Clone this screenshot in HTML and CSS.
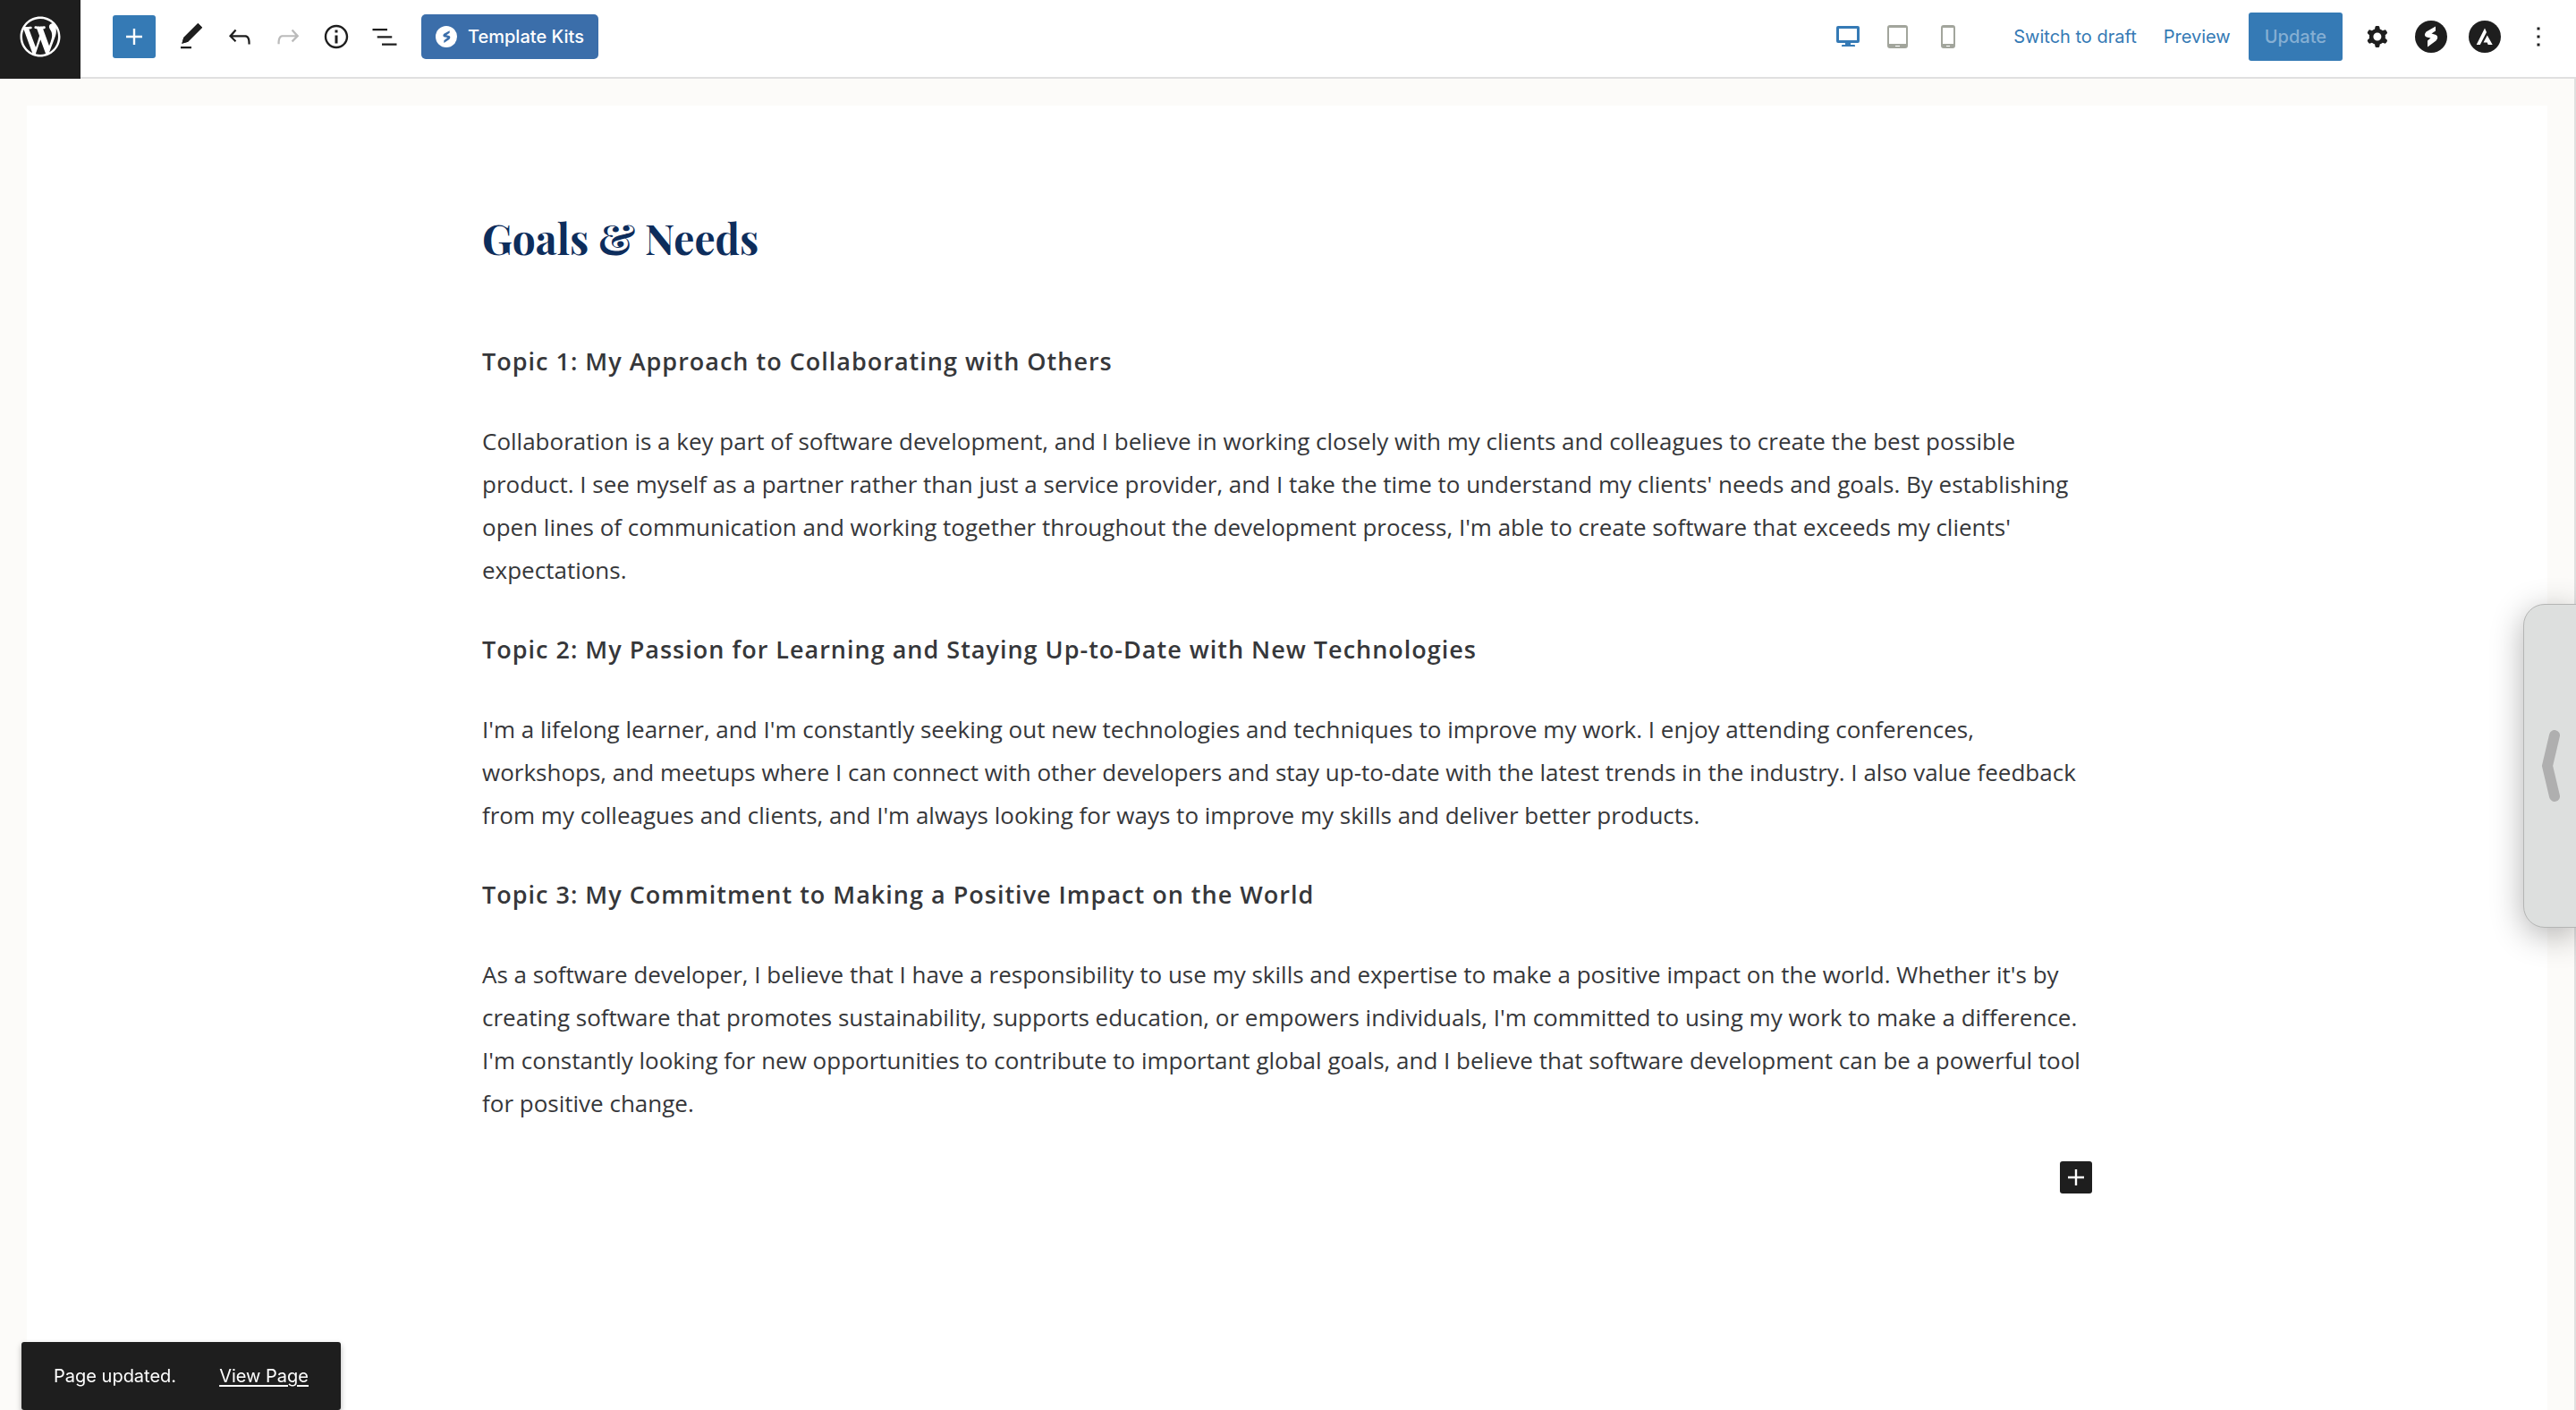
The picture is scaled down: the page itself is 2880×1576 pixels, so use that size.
FILE: index.html
```html
<!DOCTYPE html>
<html lang="en">
<head>
<meta charset="utf-8">
<title>Edit Page</title>
<link rel="stylesheet" href="styles.css">
</head>
<body>
<header class="toolbar">
  <a class="home" href="#" aria-label="View pages">
    <svg viewBox="-2 -2 24 24"><path d="M20 10c0-5.51-4.49-10-10-10C4.48 0 0 4.49 0 10c0 5.52 4.48 10 10 10 5.51 0 10-4.48 10-10zM7.78 15.37L4.37 6.22c.55-.02 1.17-.08 1.17-.08.5-.06.44-1.13-.06-1.11 0 0-1.45.11-2.37.11-.18 0-.37 0-.58-.01C4.12 2.69 6.87 1.11 10 1.11c2.33 0 4.45.87 6.05 2.34-.68-.11-1.65.39-1.65 1.58 0 .74.45 1.36.9 2.1.35.61.55 1.36.55 2.46 0 1.49-1.4 5-1.4 5l-3.03-8.37c.54-.02.82-.17.82-.17.5-.05.44-1.25-.06-1.22 0 0-1.44.12-2.38.12-.87 0-2.33-.12-2.33-.12-.5-.03-.56 1.2-.06 1.22l.92.08 1.26 3.41zM17.41 10c.24-.64.74-1.87.43-4.25.7 1.29 1.05 2.71 1.05 4.25 0 3.29-1.73 6.24-4.4 7.78.97-2.59 1.94-5.2 2.92-7.78zM6.1 18.09C3.12 16.65 1.11 13.53 1.11 10c0-1.3.23-2.48.72-3.59C3.25 10.3 4.67 14.2 6.1 18.09zm4.03-6.63l2.58 6.98c-.86.29-1.76.45-2.71.45-.79 0-1.57-.11-2.29-.33.81-2.38 1.62-4.74 2.42-7.1z"/></svg>
  </a>
  <div class="tools">
    <button class="insert" aria-label="Add block"><svg viewBox="0 0 24 24"><path d="M18 11.2h-5.2V6h-1.6v5.2H6v1.6h5.2V18h1.6v-5.2H18z"/></svg></button>
    <div class="icons">
      <button class="icon" aria-label="Tools"><svg viewBox="0 0 24 24"><path d="M20.1 5.1L16.9 2 6.2 12.7l-1.3 4.4 4.5-1.3L20.1 5.1zM4 20.8h8v-1.5H4v1.5z"/><path d="M16.9 2 6.2 12.7l-1.3 4.4 4.5-1.3L20.1 5.1z"/></svg></button>
      <button class="icon" aria-label="Undo"><svg viewBox="0 0 24 24"><path d="M18.3 11.7c-.6-.6-1.4-.9-2.3-.9H6.7l2.9-3.3-1.1-1-4.5 5L8.5 16l1-1-2.7-2.7H16c.5 0 .9.2 1.3.5 1 1 1 3.4 1 4.5v.3h1.5v-.2c0-1.5 0-4.3-1.5-5.7z"/></svg></button>
      <button class="icon" aria-label="Redo" disabled><svg viewBox="0 0 24 24"><path d="M15.6 6.5l-1.1 1 2.9 3.3H8c-.9 0-1.7.3-2.3.9-1.4 1.5-1.4 4.2-1.4 5.6v.2h1.5v-.3c0-1.1 0-3.5 1-4.5.3-.3.7-.5 1.3-.5h9.2L14.5 15l1.1 1.1 4.6-4.6-4.6-5z"/></svg></button>
      <button class="icon" aria-label="Details"><svg viewBox="0 0 24 24"><path d="M12 3.2c-4.8 0-8.8 3.9-8.8 8.8 0 4.8 3.9 8.8 8.8 8.8 4.8 0 8.8-3.9 8.8-8.8 0-4.8-4-8.8-8.8-8.8zm0 16c-4 0-7.2-3.3-7.2-7.2C4.8 8 8 4.8 12 4.8s7.2 3.3 7.2 7.2c0 4-3.2 7.2-7.2 7.2zM11 17h2v-6h-2v6zm0-8h2V7h-2v2z"/></svg></button>
      <button class="icon" aria-label="List view"><svg viewBox="0 0 24 24"><path d="M3 6h11v1.5H3V6Zm3.5 5.5h11V13h-11v-1.5ZM21 17H10v1.5h11V17Z"/></svg></button>
    </div>
    <button class="kits"><svg viewBox="0 0 36 36"><circle cx="18" cy="18" r="18"/><path class="mark" d="M23.500 8 14 13q-3 3 0 5.500l6 1-6 5v4l9-6q3-4 0-6l-5-1 5.500-4z"/></svg>Template Kits</button>
  </div>
  <div class="settings">
    <div class="devices">
      <button class="device active" aria-label="Desktop"><svg viewBox="0 0 26 26"><path fill-rule="evenodd" d="M2 1h22q2 0 2 2v15q0 2-2 2h-8v2h4q1 0 1 1v1H6v-1q0-1 1-1h3v-2H2q-2 0-2-2V3q0-2 2-2zm1 3v13h20V4z"/></svg></button>
      <button class="device" aria-label="Tablet"><svg viewBox="0 0 26 26"><path fill-rule="evenodd" d="M4 0h17q3 0 3 3v20q0 3-3 3H4q-3 0-3-3V3q0-3 3-3zM3 3v18h19V3zm7 20v1h5v-1z"/></svg></button>
      <button class="device" aria-label="Mobile"><svg viewBox="0 0 26 26"><path fill-rule="evenodd" d="M8 0h10q3 0 3 3v20q0 3-3 3H8q-3 0-3-3V3q0-3 3-3zM7 3v18h12V3zm4 20v1h4v-1z"/></svg></button>
    </div>
    <button class="link">Switch to draft</button>
    <button class="link">Preview</button>
    <button class="update">Update</button>
    <div class="panels">
      <button class="icon" aria-label="Settings"><svg viewBox="0 0 24 24"><path fill-rule="evenodd" d="M10.289 4.836A1 1 0 0111.275 4h1.306a1 1 0 01.987.836l.244 1.466c.787.26 1.503.679 2.108 1.218l1.393-.522a1 1 0 011.216.437l.653 1.13a1 1 0 01-.23 1.273l-1.148.944a6.025 6.025 0 010 2.435l1.149.946a1 1 0 01.23 1.272l-.653 1.13a1 1 0 01-1.216.437l-1.394-.522c-.605.54-1.32.958-2.108 1.218l-.244 1.466a1 1 0 01-.987.836h-1.306a1 1 0 01-.986-.836l-.244-1.466a5.995 5.995 0 01-2.108-1.218l-1.394.522a1 1 0 01-1.217-.436l-.653-1.131a1 1 0 01.23-1.272l1.149-.946a6.026 6.026 0 010-2.435l-1.148-.944a1 1 0 01-.23-1.272l.653-1.131a1 1 0 011.217-.437l1.393.522a5.994 5.994 0 012.108-1.218l.244-1.466zM14.929 12a3 3 0 11-6 0 3 3 0 016 0z"/></svg></button>
      <button class="icon" aria-label="Spectra"><svg viewBox="0 0 36 36"><circle cx="18" cy="18" r="18"/><path class="mark" d="M23 6.500 12.500 12.500q-3.500 4 .5 6l4.500 1-3.500 3v7l9.500-7q3.500-4 0-6.500l-5-1.500 4.500-3z"/></svg></button>
      <button class="icon" aria-label="Astra settings"><svg viewBox="0 0 36 36"><circle cx="18" cy="18" r="18"/><path class="mark" d="M18 8.500 8.700 27h4.100L20 13zM20.800 16.500 16.500 24.500h4.200l1 2.500h5z"/></svg></button>
      <button class="icon" aria-label="Options"><svg viewBox="0 0 24 24"><path d="M13 19h-2v-2h2v2zm0-6h-2v-2h2v2zm0-6h-2V5h2v2z"/></svg></button>
    </div>
  </div>
</header>
<main class="workspace">
  <article class="canvas">
    <div class="content">
      <h1>Goals &amp; Needs</h1>
      <h2>Topic 1: My Approach to Collaborating with Others</h2>
      <p>Collaboration is a key part of software development, and I believe in working closely with my clients and colleagues to create the best possible product. I see myself as a partner rather than just a service provider, and I take the time to understand my clients' needs and goals. By establishing open lines of communication and working together throughout the development process, I'm able to create software that exceeds my clients' expectations.</p>
      <h2>Topic 2: My Passion for Learning and Staying Up-to-Date with New Technologies</h2>
      <p>I'm a lifelong learner, and I'm constantly seeking out new technologies and techniques to improve my work. I enjoy attending conferences, workshops, and meetups where I can connect with other developers and stay up-to-date with the latest trends in the industry. I also value feedback from my colleagues and clients, and I'm always looking for ways to improve my skills and deliver better products.</p>
      <h2>Topic 3: My Commitment to Making a Positive Impact on the World</h2>
      <p>As a software developer, I believe that I have a responsibility to use my skills and expertise to make a positive impact on the world. Whether it's by creating software that promotes sustainability, supports education, or empowers individuals, I'm committed to using my work to make a difference. I'm constantly looking for new opportunities to contribute to important global goals, and I believe that software development can be a powerful tool for positive change.</p>
      <button class="append" aria-label="Add block"><svg viewBox="0 0 24 24"><path d="M18 11.2h-5.2V6h-1.6v5.2H6v1.6h5.2V18h1.6v-5.2H18z"/></svg></button>
    </div>
  </article>
</main>
<button class="drawer" aria-label="Open side panel"><svg viewBox="0 0 20 80"><path d="M14 6 6 40l8 34"/></svg></button>
<div class="snackbar" role="status">Page updated. <a href="#">View Page</a></div>
</body>
</html>
```

FILE: styles.css
```css
* { box-sizing: border-box; }

body {
  display: flex;
  flex-direction: column;
  height: 100vh;
  margin: 0;
  overflow: hidden;
  background: #fff;
  color: #1e1e1e;
  font: 20px/28px Inter, "Liberation Sans", sans-serif;
}

button {
  display: flex;
  align-items: center;
  justify-content: center;
  padding: 0;
  border: 0;
  background: none;
  color: inherit;
  font: inherit;
}

svg { display: block; fill: currentColor; }

.toolbar {
  display: flex;
  flex: none;
  justify-content: space-between;
  height: 88px;
  border-bottom: 2px solid #e0e0e0;
}

.home {
  display: flex;
  align-items: center;
  justify-content: center;
  width: 90px;
  height: 88px;
  padding-bottom: 6px;
  background: #1e1e1e;
  color: #fff;
}
.home svg { width: 54px; height: 54px; }

.tools, .settings {
  display: flex;
  align-items: center;
  padding-bottom: 4px;
}
.tools { flex: 1; padding-left: 36px; }
.settings { padding-right: 24px; }

.insert {
  width: 48px;
  height: 48px;
  border-radius: 3px;
  background: #357ab5;
  color: #fff;
}
.insert svg, .icon svg { width: 36px; height: 36px; }

.icons { display: flex; gap: 18px; margin: 0 23px 0 22px; }
.icon:disabled { color: #bbb; }
.mark { fill: #fff; }

.kits {
  gap: 12px;
  height: 50px;
  padding: 0 16px;
  border-radius: 5px;
  background: #3b6eaa;
  color: #fff;
  font-weight: 500;
}
.kits svg { width: 24px; height: 24px; }
.kits .mark { fill: #3b6eaa; }

.devices { display: flex; gap: 30px; margin-right: 60px; color: #a2a59c; }
.device svg { width: 26px; height: 26px; }
.active { color: #357ab5; }

.link { margin-right: 30px; color: #357ab5; }
.link + .link { margin-right: 20px; }

.update {
  height: 54px;
  padding: 0 18px;
  border-radius: 3px;
  background: #357ab5;
  color: #86afd3;
  font-weight: 500;
}

.panels { display: flex; gap: 24px; margin-left: 21px; }

.workspace {
  flex: 1;
  min-height: 0;
  padding: 30px 30px 0;
  border-right: 2px solid #e0e0e0;
  background: #fcfbf9;
}

.canvas { height: 100%; background: #fff; }

.content {
  display: flex;
  flex-direction: column;
  gap: 41px;
  max-width: 1800px;
  margin: 0 auto;
  padding-top: 118px;
  color: #36373a;
  font: 26px/48px "Open Sans", "Noto Sans", sans-serif;
}
.content h1, .content h2, .content p { margin: 0; }
.content h1 {
  margin-bottom: 43px;
  color: #0d2d5c;
  font: bold 46px/60px "Playfair Display", "Liberation Serif", serif;
}
.content h2 {
  font-size: 27px;
  font-weight: 600;
  letter-spacing: 1px;
}

.append {
  align-self: flex-end;
  width: 36px;
  height: 36px;
  border-radius: 3px;
  background: #1e1e1e;
  color: #fff;
}
.append svg { width: 36px; height: 36px; }

.drawer {
  position: fixed;
  top: 675px;
  right: -2px;
  width: 61px;
  height: 362px;
  border: 1px solid #b4b5b4;
  border-radius: 24px 0 0 24px;
  background: #dddfde;
  box-shadow: 0 8px 36px rgba(0, 0, 0, .3);
}
.drawer svg {
  width: 20px;
  height: 80px;
  fill: none;
  stroke: #afafaf;
  stroke-width: 12;
  stroke-linecap: round;
  stroke-linejoin: round;
}

.snackbar {
  position: fixed;
  bottom: 0;
  left: 24px;
  display: flex;
  gap: 48px;
  padding: 24px 36px;
  border-radius: 3px;
  background: #1e1e1e;
  box-shadow: 0 3px 6px rgba(0, 0, 0, .3);
  color: #fff;
}
.snackbar a { color: inherit; text-underline-offset: 3px; }
```
